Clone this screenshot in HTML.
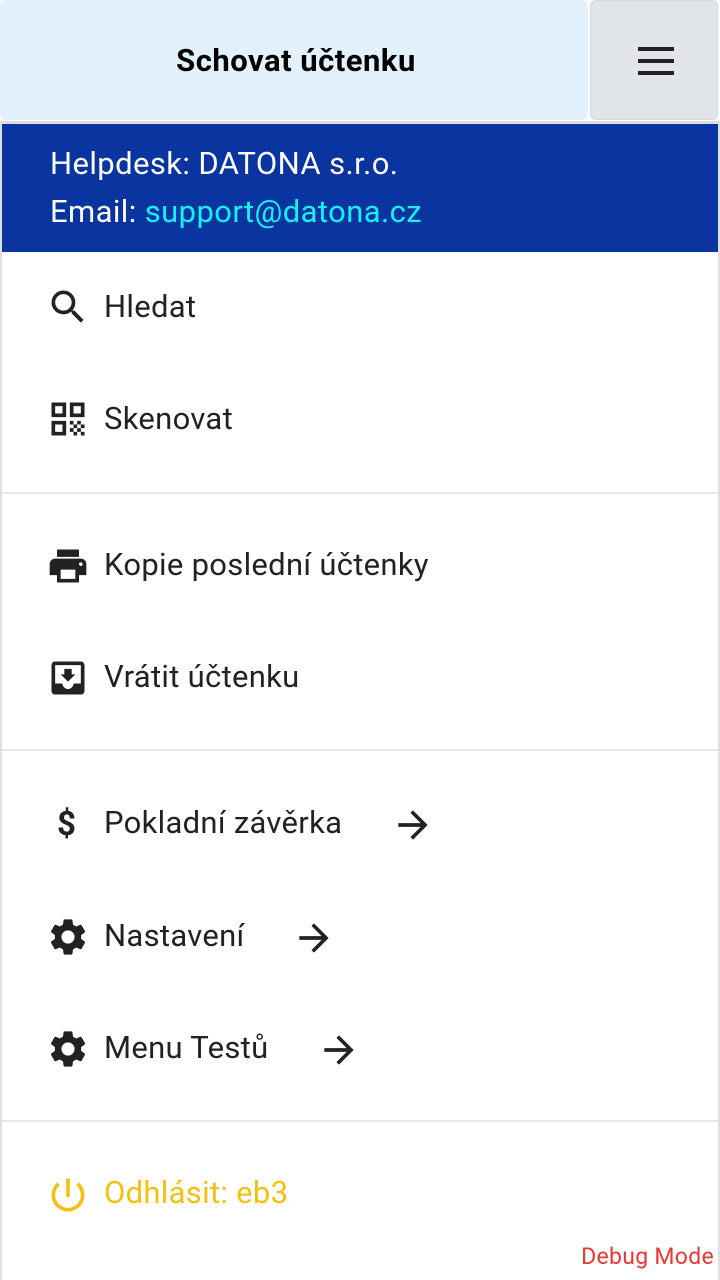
<!DOCTYPE html>
<html><head><meta charset="utf-8"><style>
*{margin:0;padding:0;box-sizing:border-box}
body{width:720px;height:1280px;background:#fff;font-family:"Roboto","Liberation Sans",sans-serif;position:relative;overflow:hidden}
.hdr{position:absolute;left:0;top:0;width:588px;height:120px;background:#e3f1fc;border-radius:6px;display:flex;align-items:center;justify-content:center;font-weight:bold;font-size:31px;letter-spacing:0.5px;color:#000;padding-left:4px}
.mb{position:absolute;left:590px;top:0;width:128px;height:120px;background:#e1e5ea;border:1px solid #d4d8dc;border-radius:6px}
.mb i{position:absolute;left:47px;width:36px;height:4px;background:#222}
.panel{position:absolute;left:0;right:0;top:121px;bottom:0;border:2px solid #e0e0e0;border-top:3px solid #ddd;border-bottom:none}
.blue{position:absolute;left:2px;top:124px;width:716px;height:128px;background:#0a35a0;color:#fff;font-size:31px;letter-spacing:0.4px}
.blue div{position:absolute;left:48px}
.it{position:absolute;left:104px;font-size:31px;letter-spacing:0.3px;color:#222;line-height:34px;transform:translateY(-17px)}
.ic{position:absolute;left:46px;width:44px;height:44px;transform:translateY(-22px)}
.div{position:absolute;left:2px;right:2px;height:2px;background:#e8e8e8}
.arr{position:absolute;width:44px;height:44px;transform:translateY(-22px)}
</style></head><body>
<div class="hdr">Schovat účtenku</div>
<div class="mb"><i style="top:46px"></i><i style="top:58px"></i><i style="top:70px"></i></div>
<div class="panel"></div>
<div class="blue"><div style="top:21px">Helpdesk: DATONA s.r.o.</div><div style="top:69px">Email: <span style="color:#13f2f2">support@datona.cz</span></div></div>

<svg class="ic" style="top:307px" viewBox="0 0 24 24"><path fill="#222" d="M15.5 14h-.79l-.28-.27A6.47 6.47 0 0 0 16 9.5 6.5 6.5 0 1 0 9.5 16c1.61 0 3.09-.59 4.23-1.57l.27.28v.79l5 4.99L20.49 19l-4.99-5zm-6 0C7.01 14 5 11.99 5 9.5S7.01 5 9.5 5 14 7.01 14 9.5 11.99 14 9.5 14z"/></svg>
<div class="it" style="top:307px">Hledat</div>
<svg class="ic" style="top:419px" viewBox="0 0 24 24"><path fill="#222" d="M3 11h8V3H3v8zm2-6h4v4H5V5zM3 21h8v-8H3v8zm2-6h4v4H5v-4zM13 3v8h8V3h-8zm6 6h-4V5h4v4zM13 13h2v2h-2zM15 15h2v2h-2zM13 17h2v2h-2zM17 17h2v2h-2zM19 19h2v2h-2zM15 19h2v2h-2zM17 13h2v2h-2zM19 15h2v2h-2z"/></svg>
<div class="it" style="top:419px">Skenovat</div>
<div class="div" style="top:492px"></div>
<svg class="ic" style="top:566px" viewBox="0 0 24 24"><path fill="#222" d="M19 8H5c-1.66 0-3 1.34-3 3v6h4v4h12v-4h4v-6c0-1.66-1.34-3-3-3zm-3 11H8v-5h8v5zm3-7c-.55 0-1-.45-1-1s.45-1 1-1 1 .45 1 1-.45 1-1 1zm-1-9H6v4h12V3z"/></svg>
<div class="it" style="top:565px">Kopie poslední účtenky</div>
<svg class="ic" style="top:678px" viewBox="0 0 24 24"><path fill="#222" d="M19 3H4.99C3.88 3 3 3.9 3 5v14c0 1.1.88 2 1.99 2H19c1.1 0 2-.9 2-2V5c0-1.1-.9-2-2-2zm0 12h-4c0 1.66-1.35 3-3 3s-3-1.34-3-3H4.99V5H19v10zm-3-5h-2V7h-4v3H8l4 4 4-4z"/></svg>
<div class="it" style="top:677px">Vrátit účtenku</div>
<div class="div" style="top:749px"></div>
<div class="it" style="top:825px;left:57px;font-size:33px;font-weight:bold">$</div>
<div class="it" style="top:823px">Pokladní závěrka</div>
<svg class="arr" style="top:825px;left:391px" viewBox="0 0 24 24"><path fill="#222" d="M12 4l-1.41 1.41L16.17 11H4v2h12.17l-5.58 5.59L12 20l8-8z"/></svg>
<svg class="ic" style="top:937px" viewBox="0 0 24 24"><path fill="#222" d="M19.14 12.94c.04-.3.06-.61.06-.94 0-.32-.02-.64-.07-.94l2.03-1.58a.49.49 0 0 0 .12-.61l-1.92-3.32a.49.49 0 0 0-.59-.22l-2.39.96c-.5-.38-1.03-.7-1.62-.94l-.36-2.54a.48.48 0 0 0-.48-.41h-3.84c-.24 0-.43.17-.47.41l-.36 2.54c-.59.24-1.13.57-1.62.94l-2.39-.96a.48.48 0 0 0-.59.22L2.74 8.87c-.12.21-.08.47.12.61l2.03 1.58c-.05.3-.09.63-.09.94s.02.64.07.94l-2.03 1.58a.49.49 0 0 0-.12.61l1.92 3.32c.12.22.37.29.59.22l2.39-.96c.5.38 1.03.7 1.62.94l.36 2.54c.05.24.24.41.48.41h3.84c.24 0 .44-.17.47-.41l.36-2.54c.59-.24 1.13-.56 1.62-.94l2.39.96c.22.08.47 0 .59-.22l1.92-3.32c.12-.22.07-.47-.12-.61l-2.01-1.58zM12 15.6c-1.98 0-3.6-1.62-3.6-3.6s1.62-3.6 3.6-3.6 3.6 1.62 3.6 3.6-1.62 3.6-3.6 3.6z"/></svg>
<div class="it" style="top:936px">Nastavení</div>
<svg class="arr" style="top:938px;left:292px" viewBox="0 0 24 24"><path fill="#222" d="M12 4l-1.41 1.41L16.17 11H4v2h12.17l-5.58 5.59L12 20l8-8z"/></svg>
<svg class="ic" style="top:1049px" viewBox="0 0 24 24"><path fill="#222" d="M19.14 12.94c.04-.3.06-.61.06-.94 0-.32-.02-.64-.07-.94l2.03-1.58a.49.49 0 0 0 .12-.61l-1.92-3.32a.49.49 0 0 0-.59-.22l-2.39.96c-.5-.38-1.03-.7-1.62-.94l-.36-2.54a.48.48 0 0 0-.48-.41h-3.84c-.24 0-.43.17-.47.41l-.36 2.54c-.59.24-1.13.57-1.62.94l-2.39-.96a.48.48 0 0 0-.59.22L2.74 8.87c-.12.21-.08.47.12.61l2.03 1.58c-.05.3-.09.63-.09.94s.02.64.07.94l-2.03 1.58a.49.49 0 0 0-.12.61l1.92 3.32c.12.22.37.29.59.22l2.39-.96c.5.38 1.03.7 1.62.94l.36 2.54c.05.24.24.41.48.41h3.84c.24 0 .44-.17.47-.41l.36-2.54c.59-.24 1.13-.56 1.62-.94l2.39.96c.22.08.47 0 .59-.22l1.92-3.32c.12-.22.07-.47-.12-.61l-2.01-1.58zM12 15.6c-1.98 0-3.6-1.62-3.6-3.6s1.62-3.6 3.6-3.6 3.6 1.62 3.6 3.6-1.62 3.6-3.6 3.6z"/></svg>
<div class="it" style="top:1048px">Menu Testů</div>
<svg class="arr" style="top:1050px;left:317px" viewBox="0 0 24 24"><path fill="#222" d="M12 4l-1.41 1.41L16.17 11H4v2h12.17l-5.58 5.59L12 20l8-8z"/></svg>
<div class="div" style="top:1120px"></div>
<svg class="ic" style="top:1195px" viewBox="0 0 24 24"><path fill="#f5bf0f" d="M13 3h-2v10h2V3zm4.83 2.17l-1.42 1.42A6.92 6.92 0 0 1 19 12c0 3.87-3.13 7-7 7A6.995 6.995 0 0 1 7.58 6.58L6.17 5.17A8.932 8.932 0 0 0 3 12a9 9 0 0 0 18 0c0-2.74-1.23-5.18-3.17-6.83z"/></svg>
<div class="it" style="top:1193px;color:#f5bf0f">Odhlásit: eb3</div>
<div style="position:absolute;right:6px;top:1243px;color:#e53935;font-size:23px;letter-spacing:0.3px">Debug Mode</div>
</body></html>
